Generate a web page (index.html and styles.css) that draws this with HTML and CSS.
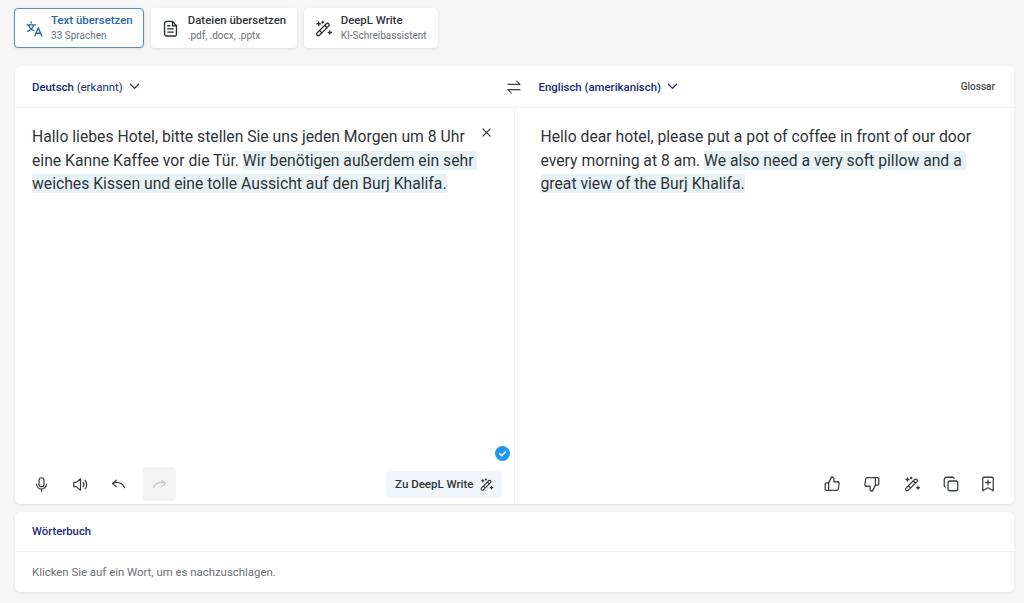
FILE: index.html
```html
<!DOCTYPE html>
<html lang="de">
  <head>
    <meta charset="utf-8" />
    <title>DeepL Übersetzer</title>
    <link rel="stylesheet" href="styles.css">
  </head>

  <body>
    <!-- Mode tabs -->
    <div class="tabs">
      <div class="tab tab-active">
        <svg class="tab-icon" viewBox="0 0 24 24">
          <path d="M2.500 7.500h10.500M7.800 3.800v1.200M4.500 7.500c.8 3.400 3.200 6 6.700 7.300M11 7.500c-.9 3.600-3.400 6.400-7.500 8"/>
          <path d="M12.500 21.500l4.300-10.500 4.300 10.500M14 18h5.600"/>
        </svg>
        <div class="tab-text">
          <span class="tab-title">Text übersetzen</span>
          <span class="tab-sub">33 Sprachen</span>
        </div>
      </div>
      <div class="tab">
        <svg class="tab-icon" viewBox="0 0 24 24">
          <path d="M7 3h7.500l5 5.500V19a2 2 0 0 1-2 2.500H7a2.500 2.500 0 0 1-2.500-2.500V5.500A2.500 2.500 0 0 1 7 3z"/>
          <path d="M14.500 3v5.500h5M8.500 12.500h7M8.500 16.500h7M8.500 8.500h2.500"/>
        </svg>
        <div class="tab-text">
          <span class="tab-title">Dateien übersetzen</span>
          <span class="tab-sub">.pdf, .docx, .pptx</span>
        </div>
      </div>
      <div class="tab">
        <svg class="tab-icon" viewBox="0 0 24 24">
          <path d="M4 17.500L15.500 6a2.100 2.100 0 0 1 3 3L7 20.500a2.100 2.100 0 0 1-3-3zM13.500 8l3 3M7 14.500l3 3"/>
          <path d="M6 4v4M4 6h4M20 15v4M18 17h4M11 3v2M10 4h2"/>
        </svg>
        <div class="tab-text">
          <span class="tab-title">DeepL Write</span>
          <span class="tab-sub">KI-Schreibassistent</span>
        </div>
      </div>
    </div>

    <!-- Translator -->
    <div class="card translator">
      <div class="lang-bar lang-bar-left">
        <span class="lang"><b>Deutsch</b> (erkannt)</span>
        <svg class="chevron" viewBox="0 0 12 12"><path d="M1.500 3.500L6 8l4.500-4.500"/></svg>
        <svg class="swap" viewBox="0 0 24 24">
          <path d="M4 8.500h15.500M15.500 4l4.500 4.500M20 15.500H4.500M8.500 20L4 15.500"/>
        </svg>
      </div>
      <div class="lang-bar lang-bar-right">
        <span class="lang lang-target">Englisch (amerikanisch)</span>
        <svg class="chevron" viewBox="0 0 12 12"><path d="M1.500 3.500L6 8l4.500-4.500"/></svg>
        <span class="glossar">Glossar</span>
      </div>

      <div class="panel panel-left">
        <p class="text">Hallo liebes Hotel, bitte stellen Sie uns jeden Morgen um 8 Uhr eine Kanne Kaffee vor die Tür. <span class="mark">Wir benötigen außerdem ein sehr weiches Kissen und eine tolle Aussicht auf den Burj Khalifa.</span></p>
        <svg class="clear" viewBox="0 0 12 12"><path d="M2 2l8 8M10 2l-8 8"/></svg>
        <span class="check">
          <svg viewBox="0 0 12 12"><path d="M3.700 6.200l1.700 1.600 2.900-3.200"/></svg>
        </span>
        <div class="tools">
          <span class="tool">
            <svg viewBox="0 0 24 24">
              <rect x="8.500" y="2.500" width="7" height="12.500" rx="3.500"/>
              <path d="M5 11.500a7 7 0 0 0 14 0M12 18.500v3"/>
            </svg>
          </span>
          <span class="tool">
            <svg viewBox="0 0 24 24">
              <path d="M2.500 9v6h3.500l6 5V4l-6 5z"/>
              <path d="M15.500 9a4.500 4.500 0 0 1 0 6M18.500 6a9 9 0 0 1 0 12"/>
            </svg>
          </span>
          <span class="tool">
            <svg viewBox="0 0 24 24"><path d="M9 6L3.500 10.500l5.500 4.500M3.500 10.500C10 7.500 17.500 9 20.500 16.500"/></svg>
          </span>
          <span class="tool tool-off">
            <svg viewBox="0 0 24 24"><path d="M15 6l5.500 4.500-5.500 4.500M20.500 10.500C14 7.500 6.500 9 3.500 16.500"/></svg>
          </span>
          <span class="write-btn">
            Zu DeepL Write
            <svg viewBox="0 0 24 24">
              <path d="M4 17.500L15.500 6a2.100 2.100 0 0 1 3 3L7 20.500a2.100 2.100 0 0 1-3-3zM13.500 8l3 3M7 14.500l3 3"/>
              <path d="M6 4v4M4 6h4M20 15v4M18 17h4M11 3v2M10 4h2"/>
            </svg>
          </span>
        </div>
      </div>

      <div class="panel panel-right">
        <p class="text">Hello dear hotel, please put a pot of coffee in front of our door every morning at 8 am. <span class="mark">We also need a very soft pillow and a great view of the Burj Khalifa.</span></p>
        <div class="tools tools-right">
          <span class="tool">
            <svg viewBox="0 0 24 24">
              <path d="M7.500 10.500v10h-3a1.500 1.500 0 0 1-1.500-1.500v-7a1.500 1.500 0 0 1 1.500-1.500zM7.500 10.500l4-8a3 3 0 0 1 3 3v3.500h5a2 2 0 0 1 2 2.300l-1.200 7.500a2 2 0 0 1-2 1.700h-10.800"/>
            </svg>
          </span>
          <span class="tool">
            <svg viewBox="0 0 24 24">
              <path d="M16.500 13.500v-10h3a1.500 1.500 0 0 1 1.500 1.500v7a1.500 1.500 0 0 1-1.500 1.500zM16.500 13.500l-4 8a3 3 0 0 1-3-3v-3.500h-5a2 2 0 0 1-2-2.300l1.200-7.500a2 2 0 0 1 2-1.700h10.800"/>
            </svg>
          </span>
          <span class="tool">
            <svg viewBox="0 0 24 24">
              <path d="M4 17.500L15.500 6a2.100 2.100 0 0 1 3 3L7 20.500a2.100 2.100 0 0 1-3-3zM13.500 8l3 3M7 14.500l3 3"/>
              <path d="M6 4v4M4 6h4M20 15v4M18 17h4M11 3v2M10 4h2"/>
            </svg>
          </span>
          <span class="tool">
            <svg viewBox="0 0 24 24">
              <rect x="8" y="8" width="13" height="13" rx="2.500"/>
              <path d="M16 4.500a2 2 0 0 0-2-1.500H6a3 3 0 0 0-3 3v8a2 2 0 0 0 1.500 2"/>
            </svg>
          </span>
          <span class="tool">
            <svg viewBox="0 0 24 24">
              <path d="M6.500 3h11a1.500 1.500 0 0 1 1.500 1.500V21l-7-4-7 4V4.500A1.500 1.500 0 0 1 6.500 3zM12 7v6M9 10h6"/>
            </svg>
          </span>
        </div>
      </div>
    </div>

    <!-- Dictionary -->
    <div class="card dict">
      <div class="dict-head">Wörterbuch</div>
      <div class="dict-body">Klicken Sie auf ein Wort, um es nachzuschlagen.</div>
    </div>
  </body>
</html>
```

FILE: styles.css
```css
body, html {
  margin: 0;
  padding: 0;
  height: 100%;
  overflow: hidden;
}
body {
  background: #f6f6f6;
  font-family: Roboto, "Liberation Sans", sans-serif;
  color: #2f3439;
  padding: 8px 10px 0 15px;
  box-sizing: border-box;
}
svg {
  fill: none;
  stroke: currentColor;
  stroke-width: 1.7;
  stroke-linecap: round;
  stroke-linejoin: round;
  display: block;
}

.tabs {
  display: flex;
  gap: 7px;
  margin-left: -1px;
  height: 40px;
}
.tab {
  display: flex;
  align-items: center;
  gap: 7.600px;
  padding: 0 11px 0 10px;
  background: white;
  border-radius: 4px;
  box-shadow: 0 1px 3px rgba(0, 0, 0, 0.1);
}
.tab-active {
  border: 1px solid #5b8db8;
  padding: 0 10.500px 0 9.500px;
}
.tab-active .tab-title {
  color: #2667ab;
}
.tab-active .tab-icon {
  color: #2667ab;
}
.tab-icon {
  width: 19px;
  height: 19px;
  color: #2a2f34;
}
.tab-text {
  display: flex;
  flex-direction: column;
  gap: 2px;
  padding-bottom: 2px;
}
.tab-title {
  font-size: 11.400px;
  font-weight: 500;
  line-height: 14px;
}
.tab-sub {
  font-size: 10px;
  line-height: 13px;
  color: #6b7075;
}

.card {
  background: white;
  border-radius: 5px;
  box-shadow: 0 1px 3px rgba(0, 0, 0, 0.08);
}
.translator {
  display: grid;
  grid-template-columns: 1fr 1fr;
  grid-template-rows: 42px 396px;
  margin-top: 18px;
}

.lang-bar {
  display: flex;
  align-items: center;
  border-bottom: 1px solid #f1f1f1;
  font-size: 11.400px;
  color: #1b2a78;
  position: relative;
}
.lang-bar-left {
  padding-left: 17px;
}
.lang-bar-right {
  padding-left: 24px;
  padding-right: 19px;
}
.lang b {
  font-weight: 500;
}
.lang-target {
  font-weight: 500;
}
.chevron {
  width: 11px;
  height: 11px;
  margin-left: 6px;
  stroke-width: 1.300;
}
.swap {
  width: 18px;
  height: 18px;
  color: #3a3f44;
  margin-left: auto;
  margin-right: -8px;
  stroke-width: 1.400;
}
.glossar {
  margin-left: auto;
  font-size: 10px;
  font-weight: 500;
  color: #4a4f54;
}

.panel {
  position: relative;
  display: flex;
  flex-direction: column;
}
.panel-left {
  padding: 17px 34px 0 17px;
  border-right: 1px solid #f1f1f1;
}
.panel-right {
  padding: 17px 26px 0 26px;
}
.text {
  margin: 0;
  font-size: 15.720px;
  line-height: 23.500px;
  flex: 1;
  white-space: pre-wrap;
}
.mark {
  background: #e6f2f6;
}
.clear {
  position: absolute;
  right: 22px;
  top: 19px;
  width: 11px;
  height: 11px;
  stroke-width: 1.300;
}
.check {
  position: absolute;
  right: 4px;
  bottom: 43px;
  width: 15px;
  height: 15px;
  border-radius: 50%;
  background: #2196f3;
  color: white;
}
.check svg {
  stroke-width: 1.200;
}

.tools {
  display: flex;
  align-items: center;
  height: 34px;
  margin-bottom: 3px;
  margin-right: -22px;
  margin-left: -7px;
}
.tool {
  width: 33px;
  height: 34px;
  display: flex;
  align-items: center;
  justify-content: center;
  margin-right: 5.500px;
  border-radius: 4px;
  color: #3a3f44;
}
.tool svg {
  width: 17px;
  height: 17px;
}
.tool-off {
  margin-left: 2.500px;
  background: #f3f3f3;
  color: #c4c6c8;
}
.write-btn {
  margin-left: auto;
  display: flex;
  align-items: center;
  gap: 5px;
  height: 27px;
  padding: 0 8px 0 9px;
  background: #f0f6fb;
  border-radius: 4px;
  font-size: 11.500px;
  font-weight: 500;
}
.write-btn svg {
  width: 15px;
  height: 15px;
}
.tools-right {
  justify-content: flex-end;
  margin: 0 -16.500px 3px 0;
}
.tools-right .tool {
  margin-right: 6.700px;
}
.tools-right .tool:last-child {
  margin-left: -3px;
  margin-right: 0;
}
.tools-right .tool svg {
  width: 18px;
  height: 18px;
}

.dict {
  margin-top: 8px;
  height: 80px;
}
.dict-head {
  height: 39px;
  padding-left: 17px;
  display: flex;
  align-items: center;
  border-bottom: 1px solid #f1f1f1;
  font-size: 11.300px;
  font-weight: 500;
  color: #1b2a78;
}
.dict-body {
  padding: 13px 17px 0;
  font-size: 11.400px;
  color: #6b7075;
}
```
